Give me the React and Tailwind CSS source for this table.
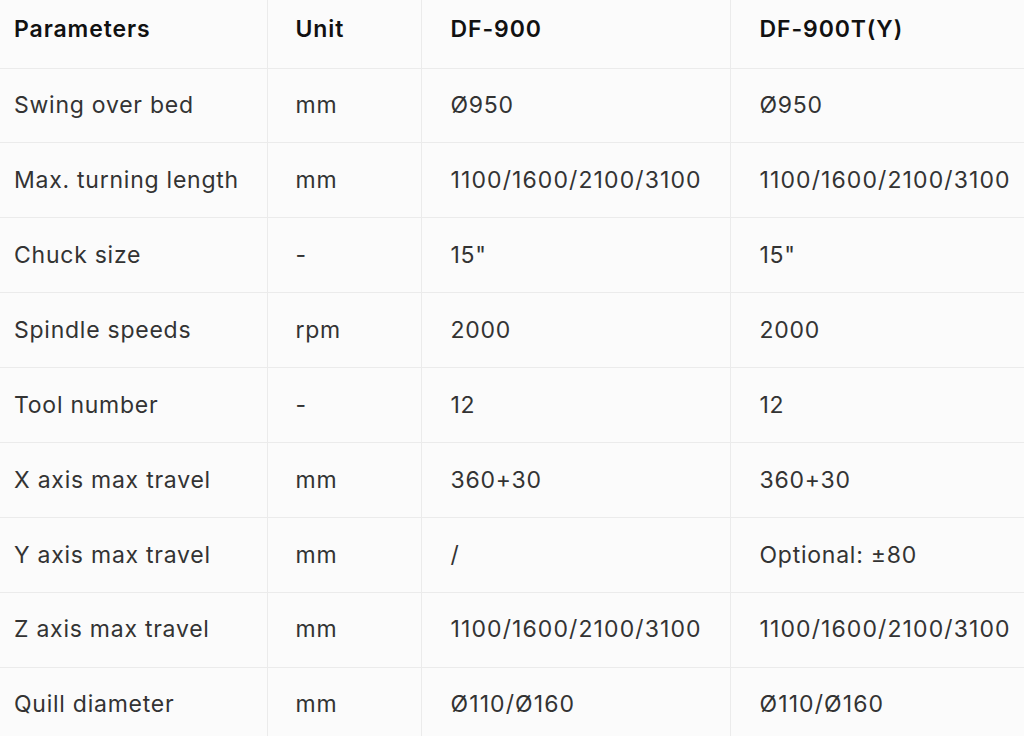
import React from 'react';

const rows = [
  ['Swing over bed', 'mm', 'Ø950', 'Ø950'],
  ['Max. turning length', 'mm', '1100/1600/2100/3100', '1100/1600/2100/3100'],
  ['Chuck size', '-', '15"', '15"'],
  ['Spindle speeds', 'rpm', '2000', '2000'],
  ['Tool number', '-', '12', '12'],
  ['X axis max travel', 'mm', '360+30', '360+30'],
  ['Y axis max travel', 'mm', '/', 'Optional: ±80'],
  ['Z axis max travel', 'mm', '1100/1600/2100/3100', '1100/1600/2100/3100'],
  ['Quill diameter', 'mm', 'Ø110/Ø160', 'Ø110/Ø160'],
];

// slashed number lists render a touch wider in the original
const spread = (v) => (v.length > 2 && v.includes('/') ? 'tracking-[1.1px]' : '');

const App = () => {
  return (
    <div className="w-[1024px] h-[736px] overflow-hidden bg-[#fbfbfb] font-['Inter',sans-serif]">
      <table className="w-full table-fixed border-collapse text-[23px]">
        <colgroup>
          <col className="w-[267px]" />
          <col className="w-[154px]" />
          <col className="w-[309px]" />
          <col className="w-[294px]" />
        </colgroup>
        <thead>
          <tr className="h-[68px] border-b border-[#ebebeb] text-left text-[#111] tracking-[0.9px]">
            <th className="pl-[14px] pb-[10px] font-semibold">Parameters</th>
            <th className="pl-[28px] pb-[10px] font-semibold border-l border-[#ebebeb]">Unit</th>
            <th className="pl-[29px] pb-[10px] font-semibold border-l border-[#ebebeb]">DF-900</th>
            <th className="pl-[29px] pb-[10px] font-semibold border-l border-[#ebebeb]">DF-900T(Y)</th>
          </tr>
        </thead>
        <tbody className="text-[#333] tracking-[0.75px]">
          {rows.map((r) => (
            <tr key={r[0]} className="h-[74.9px] border-b border-[#ebebeb]">
              <td className="pl-[14px]">{r[0]}</td>
              <td className="pl-[28px] border-l border-[#ebebeb]">{r[1]}</td>
              <td className={`pl-[29px] border-l border-[#ebebeb] ${spread(r[2])}`}>{r[2]}</td>
              <td className={`pl-[29px] border-l border-[#ebebeb] ${spread(r[3])}`}>{r[3]}</td>
            </tr>
          ))}
        </tbody>
      </table>
    </div>
  );
};

export default App;
